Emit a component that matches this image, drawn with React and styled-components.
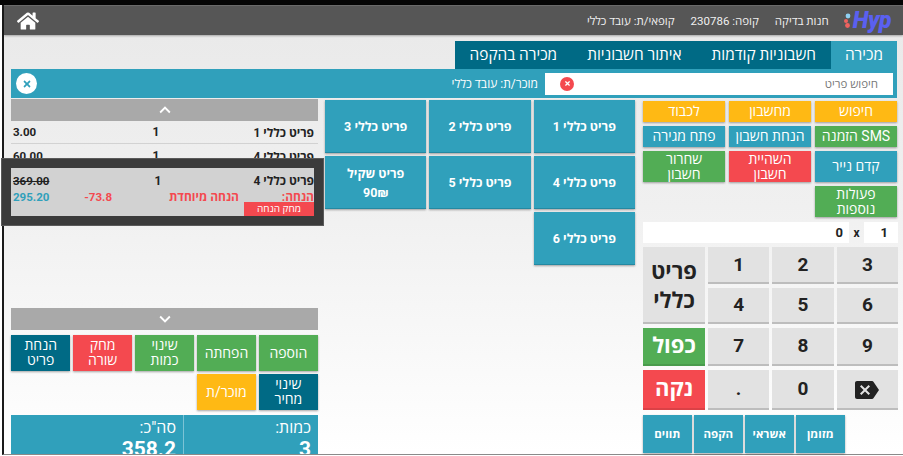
import React from 'react';
import styled, { createGlobalStyle, css } from 'styled-components';
import { FaHome, FaTimes } from 'react-icons/fa';
import { MdBackspace, MdExpandLess, MdExpandMore } from 'react-icons/md';

const tones = {
  yellow: '#ffb914',
  green: '#52ad55',
  teal: '#30a0bb',
  red: '#f4494f',
  dark: '#006a85',
};

const GlobalStyle = createGlobalStyle`
  html, body {
    margin: 0;
    padding: 0;
    background: #fff;
  }
  body {
    font-family: Roboto, "Open Sans", "Noto Sans", "Liberation Sans", sans-serif;
    overflow: hidden;
  }
`;

const Screen = styled.div`
  box-sizing: border-box;
  width: 903px;
  height: 456px;
  padding-left: 2px;
  border-top: 5px solid #050505;
`;

const Frame = styled.div`
  box-sizing: border-box;
  display: flex;
  flex-direction: column;
  height: 450px;
  border-left: 2px solid #1a1a1a;
  border-bottom: 1px solid #8a8a8a;
  background: linear-gradient(#e9e9e9, #f0f0f0 45%, #ffffff 100%);
`;

const Header = styled.header`
  flex: none;
  display: flex;
  align-items: center;
  height: 30px;
  padding: 0 12px 0 13px;
  background: #565656;
  border-top: 1px solid #6a6a6a;
  box-sizing: border-box;
  box-shadow: 0 1px 2px rgba(0, 0, 0, 0.3);
  color: #f0f0f0;
  font-size: 11.5px;
`;

const Logo = styled.div`
  display: flex;
  align-items: center;
  gap: 1px;
  margin-left: 14px;
  direction: ltr;
  color: #5a60f0;
  font-size: 23px;
  font-weight: 900;
  font-style: italic;
  letter-spacing: -0.5px;
`;

const HeaderItem = styled.span`
  margin-left: 16px;
`;

const HomeButton = styled.div`
  display: flex;
  margin-right: auto;
  color: #fff;
  font-size: 22px;
`;

const TabRow = styled.nav`
  flex: none;
  display: flex;
  margin: 6px 6px 0 0;
  align-self: flex-start;
`;

const Tab = styled.div`
  height: 28px;
  padding: 0 15px;
  line-height: 28px;
  font-size: 15.4px;
  color: #fff;
  background: ${(p) => (p.$active ? tones.teal : tones.dark)};
  ${(p) => p.$active && css`padding: 0 14px;`}
`;

const SearchBar = styled.div`
  flex: none;
  box-sizing: border-box;
  display: flex;
  align-items: center;
  height: 29px;
  margin: 0 6px 0 7px;
  padding: 0 4px 0 5px;
  background: ${tones.teal};
`;

const SearchBox = styled.div`
  display: flex;
  align-items: center;
  justify-content: space-between;
  width: 348px;
  height: 22px;
  padding: 0 15px;
  box-sizing: border-box;
  background: #fff;
  font-size: 11.5px;
  color: #777;
`;

const ClearDot = styled.span`
  display: flex;
  align-items: center;
  justify-content: center;
  width: 14px;
  height: 14px;
  border-radius: 50%;
  background: ${tones.red};
  color: #fff;
  font-size: 7px;
`;

const SellerLabel = styled.span`
  margin-right: 7px;
  color: #fff;
  font-size: 12px;
`;

const CloseCircle = styled.span`
  display: flex;
  align-items: center;
  justify-content: center;
  width: 21px;
  height: 21px;
  margin-right: auto;
  border-radius: 50%;
  background: #fff;
  color: ${tones.teal};
  font-size: 10px;
`;

const Columns = styled.main`
  flex: 1;
  min-height: 0;
  display: flex;
  padding: 0 5px 0 7px;
`;

const RightColumn = styled.section`
  flex: none;
  width: 255px;
  margin-left: 8px;
  padding-top: 3px;
`;

const ActionGrid = styled.div`
  display: grid;
  grid-template-columns: repeat(3, 82px);
  grid-template-rows: 21px 21px 31px 31px;
  gap: 4px;
  padding: 0 1px;
`;

const Button = styled.div`
  display: flex;
  align-items: center;
  justify-content: center;
  text-align: center;
  white-space: pre;
  box-sizing: border-box;
  background: ${(p) => tones[p.$tone]};
  color: #fff;
  font-size: 14px;
  line-height: 15px;
  box-shadow: 0 1px 2px rgba(0, 0, 0, 0.35);
`;

const AmountRow = styled.div`
  display: flex;
  align-items: center;
  height: 21px;
  margin-top: 5px;
  font-size: 13px;
  font-weight: 700;
  color: #222;
`;

const AmountField = styled.div`
  box-sizing: border-box;
  width: ${(p) => p.$width};
  flex: ${(p) => (p.$grow ? 1 : 'none')};
  height: 21px;
  padding-right: ${(p) => p.$pad}px;
  line-height: 21px;
  background: #fff;
`;

const Times = styled.span`
  flex: none;
  width: 15px;
  text-align: center;
  font-size: 12px;
`;

const Keypad = styled.div`
  display: grid;
  grid-template-columns: repeat(4, 1fr);
  grid-template-rows: 37px 36px 38px 40px;
  column-gap: 3px;
  row-gap: 4px;
  margin-top: 4px;
`;

const Key = styled.div`
  display: flex;
  align-items: center;
  justify-content: center;
  text-align: center;
  box-sizing: border-box;
  padding-top: 1px;
  color: ${(p) => (p.$tone ? '#fff' : '#222')};
  background: ${(p) => (p.$tone ? tones[p.$tone] : '#e2e2e2')};
  border-bottom: 2px solid ${(p) => (p.$tone ? 'rgba(0, 0, 0, 0.1)' : '#bdbdbd')};
  font-size: ${(p) => p.$size || 19}px;
  font-weight: 700;
  line-height: 1.3;
  ${(p) => p.$tall && css`
    grid-row: span 2;
    line-height: 29px;
    padding: 2px 8px 0;
  `}
`;

const TenderRow = styled.div`
  display: flex;
  gap: 2.5px;
  margin-top: 5px;
`;

const TenderButton = styled(Button)`
  width: 48.5px;
  height: 38px;
  font-weight: 700;
  font-size: 11.5px;
  background: ${tones.teal};
`;

const ProductGrid = styled.section`
  flex: none;
  width: 310px;
  margin-left: 7px;
  padding-top: 2px;
  display: grid;
  grid-template-columns: repeat(3, 1fr);
  grid-auto-rows: 53px;
  align-content: start;
  gap: 3px;
`;

const Product = styled.div`
  display: flex;
  flex-direction: column;
  align-items: center;
  justify-content: center;
  gap: 3px;
  background: ${tones.teal};
  border-bottom: 1px solid #2489a2;
  box-shadow: 0 1px 2px rgba(0, 0, 0, 0.35);
  color: #fff;
  font-size: 12.5px;
  font-weight: 700;
`;

const CartColumn = styled.section`
  flex: none;
  width: 307px;
  display: flex;
  flex-direction: column;
  padding-top: 1px;
`;

const ScrollBar = styled.div`
  flex: none;
  display: flex;
  align-items: center;
  justify-content: center;
  height: 22px;
  background: #a9a9a9;
  color: #fff;
  font-size: 22px;
`;

const CartList = styled.div`
  flex: 1;
  min-height: 0;
`;

const CartRow = styled.div`
  display: grid;
  grid-template-columns: 138px 40px 1fr;
  align-items: center;
  box-sizing: border-box;
  height: ${(p) => p.$height}px;
  padding: 0 4px 0 2px;
  border-bottom: ${(p) => (p.$line ? '1px solid #d2d2d2' : 'none')};
  font-size: 12px;
  font-weight: 700;
  color: #222;
`;

const Qty = styled.span`
  text-align: center;
`;

const Price = styled.span`
  font-size: 11.5px;
  text-align: left;
  text-decoration: ${(p) => (p.$struck ? 'line-through' : 'none')};
`;

const SelectedRow = styled.div`
  position: relative;
  box-sizing: border-box;
  height: 48px;
  margin-right: 4px;
  padding-left: 2px;
  background: #d2d2d2;
  box-shadow: 0 0 0 9px #3b3b3b, 0 0 0 10px #5a5a5a;
`;

const SelectedTop = styled(CartRow)`
  height: 20px;
  padding: 4px 0 0 0;
  grid-template-columns: 136px 40px 1fr;
`;

const DiscountLine = styled.div`
  display: grid;
  grid-template-columns: 75px 127px 60px 1fr;
  align-items: center;
  height: 14px;
  font-size: 12px;
  font-weight: 700;
  color: ${tones.red};
`;

const DiscountCell = styled.span`
  direction: ${(p) => (p.$ltr ? 'ltr' : 'rtl')};
  font-size: ${(p) => (p.$ltr ? 11.5 : 12)}px;
  text-align: ${(p) => (p.$end || !p.$ltr ? 'right' : 'left')};
  color: ${(p) => p.$color || 'inherit'};
`;

const RemoveDiscount = styled.div`
  width: 70px;
  height: 14px;
  line-height: 14px;
  text-align: center;
  background: ${tones.red};
  color: #fff;
  font-size: 10px;
`;

const CartActions = styled.div`
  flex: none;
  display: grid;
  grid-template-columns: repeat(5, 1fr);
  grid-auto-rows: 36px;
  gap: 3px 2.5px;
  margin-top: 5px;
`;

const Totals = styled.div`
  flex: none;
  display: grid;
  grid-template-columns: 135px 1fr;
  height: 39px;
  margin-top: 5px;
  overflow: hidden;
  background: ${tones.teal};
  color: #fff;
`;

const TotalCell = styled.div`
  padding: 3px 7px 0 0;
  border-left: ${(p) => (p.$divider ? '1px solid #7cc3d5' : 'none')};
  font-size: 16px;
  line-height: 19px;
`;

const TotalValue = styled.div`
  font-size: 21px;
  font-weight: 700;
  line-height: 24px;
`;

const actions = [
  ['חיפוש', 'yellow'],
  ['מחשבון', 'yellow'],
  ['לכבוד', 'yellow'],
  ['SMS הזמנה', 'green'],
  ['הנחת חשבון', 'teal'],
  ['פתח מגירה', 'teal'],
  ['קדם נייר', 'teal'],
  ['השהיית\nחשבון', 'red'],
  ['שחרור\nחשבון', 'green'],
  ['פעולות\nנוספות', 'green'],
];

const cartActions = [
  ['הוספה', 'green'],
  ['הפחתה', 'green'],
  ['שינוי\nכמות', 'green'],
  ['מחק\nשורה', 'red'],
  ['הנחת\nפריט', 'dark'],
  ['שינוי\nמחיר', 'dark'],
  ['מוכר/ת', 'yellow'],
];

const HypDots = () => (
  <svg width="9" height="16" viewBox="0 0 9 16">
    <circle cx="5" cy="3" r="2.4" fill="#8fd0f2" />
    <circle cx="3" cy="8" r="2" fill="#f0625f" />
    <circle cx="4.5" cy="12.5" r="2.4" fill="#f0625f" />
  </svg>
);

export default function App() {
  return (
    <Screen>
      <GlobalStyle />
      <Frame dir="rtl">
        <Header>
          <Logo dir="ltr">
            <HypDots />
            Hyp
          </Logo>
          <HeaderItem>חנות בדיקה</HeaderItem>
          <HeaderItem>קופה: 230786</HeaderItem>
          <HeaderItem>קופאי/ת: עובד כללי</HeaderItem>
          <HomeButton>
            <FaHome />
          </HomeButton>
        </Header>

        <TabRow>
          <Tab $active>מכירה</Tab>
          <Tab>חשבוניות קודמות</Tab>
          <Tab>איתור חשבוניות</Tab>
          <Tab>מכירה בהקפה</Tab>
        </TabRow>

        <SearchBar>
          <SearchBox>
            <span>חיפוש פריט</span>
            <ClearDot>
              <FaTimes />
            </ClearDot>
          </SearchBox>
          <SellerLabel>מוכר/ת: עובד כללי</SellerLabel>
          <CloseCircle>
            <FaTimes />
          </CloseCircle>
        </SearchBar>

        <Columns>
          <RightColumn>
            <ActionGrid>
              {actions.map(([label, tone]) => (
                <Button key={label} $tone={tone}>
                  {label}
                </Button>
              ))}
            </ActionGrid>

            <AmountRow>
              <AmountField $width="34px" $pad={10}>1</AmountField>
              <Times>x</Times>
              <AmountField $grow $pad={6}>0</AmountField>
            </AmountRow>

            <Keypad>
              <Key>3</Key>
              <Key>2</Key>
              <Key>1</Key>
              <Key $tall $size={22}>פריט כללי</Key>
              <Key>6</Key>
              <Key>5</Key>
              <Key>4</Key>
              <Key>9</Key>
              <Key>8</Key>
              <Key>7</Key>
              <Key $tone="green" $size={22}>כפול</Key>
              <Key $size={24}>
                <MdBackspace style={{ transform: 'scaleX(-1)' }} />
              </Key>
              <Key>0</Key>
              <Key>.</Key>
              <Key $tone="red" $size={22}>נקה</Key>
            </Keypad>

            <TenderRow dir="ltr">
              <TenderButton dir="rtl">תווים</TenderButton>
              <TenderButton dir="rtl">הקפה</TenderButton>
              <TenderButton dir="rtl">אשראי</TenderButton>
              <TenderButton dir="rtl">מזומן</TenderButton>
            </TenderRow>
          </RightColumn>

          <ProductGrid>
            <Product>פריט כללי 1</Product>
            <Product>פריט כללי 2</Product>
            <Product>פריט כללי 3</Product>
            <Product>פריט כללי 4</Product>
            <Product>פריט כללי 5</Product>
            <Product>
              <span>פריט שקיל</span>
              <span>90₪</span>
            </Product>
            <Product>פריט כללי 6</Product>
          </ProductGrid>

          <CartColumn>
            <ScrollBar>
              <MdExpandLess />
            </ScrollBar>
            <CartList>
              <CartRow $height={23} $line>
                <span>פריט כללי 1</span>
                <Qty>1</Qty>
                <Price>3.00</Price>
              </CartRow>
              <CartRow $height={24}>
                <span>פריט כללי 4</span>
                <Qty>1</Qty>
                <Price>60.00</Price>
              </CartRow>
              <SelectedRow>
                <SelectedTop>
                  <span>פריט כללי 4</span>
                  <Qty>1</Qty>
                  <Price $struck>369.00</Price>
                </SelectedTop>
                <DiscountLine>
                  <DiscountCell>הנחה:</DiscountCell>
                  <DiscountCell>הנחה מיוחדת</DiscountCell>
                  <DiscountCell $ltr $end>-73.8</DiscountCell>
                  <DiscountCell $ltr $color={tones.teal}>295.20</DiscountCell>
                </DiscountLine>
                <RemoveDiscount>מחק הנחה</RemoveDiscount>
              </SelectedRow>
            </CartList>
            <ScrollBar>
              <MdExpandMore />
            </ScrollBar>

            <CartActions>
              {cartActions.map(([label, tone]) => (
                <Button key={label} $tone={tone}>
                  {label}
                </Button>
              ))}
            </CartActions>

            <Totals>
              <TotalCell $divider>
                כמות:
                <TotalValue>3</TotalValue>
              </TotalCell>
              <TotalCell>
                סה"כ:
                <TotalValue>358.2</TotalValue>
              </TotalCell>
            </Totals>
          </CartColumn>
        </Columns>
      </Frame>
    </Screen>
  );
}
